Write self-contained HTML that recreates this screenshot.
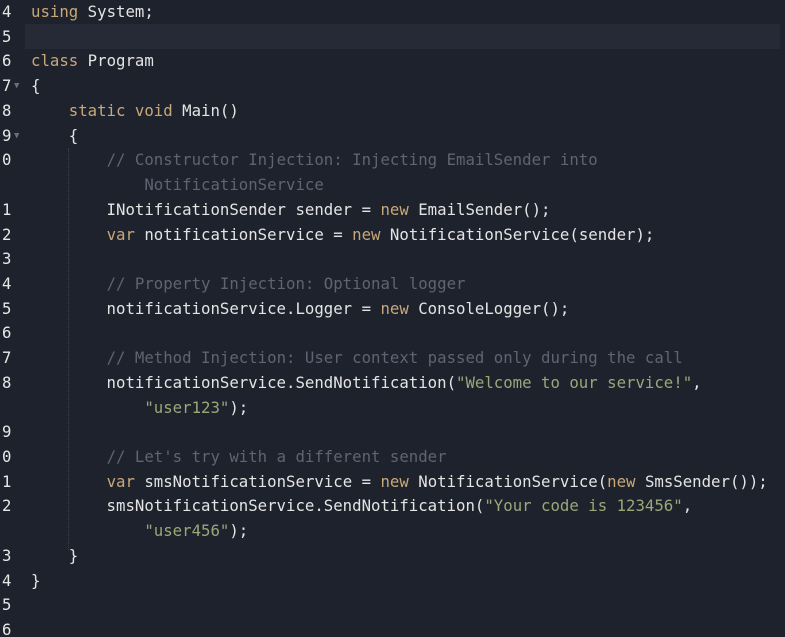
<!DOCTYPE html>
<html><head><meta charset="utf-8"><style>
html,body{margin:0;padding:0;background:#1e222d;width:785px;height:637px;overflow:hidden}
.ed{position:relative;font-family:"DejaVu Sans Mono","Liberation Mono",monospace;font-size:15.7px;color:#e4e4e4}
.l{position:absolute;left:0;height:24.72px;line-height:24.72px;white-space:pre;width:785px}
.n{position:absolute;left:2px;color:#e8e8e8;font-size:15.6px}
.c{position:absolute;left:31px}
.k{color:#c8a878}.m{color:#5e6472}.s{color:#9ca679}
.f{position:absolute;left:14px;color:#6a6f7a;font-size:9px}
.act{position:absolute;left:25px;top:24px;width:755px;height:25px;background:#252a36}
.g{position:absolute;left:68px;width:0;border-left:1px dotted #3a3f4b}
</style></head><body><div class="ed">
<div class="act"></div>
<div class="g" style="top:148px;height:402px"></div>
<div class="l" style="top:0"><span class="n">4</span><span class="c"><span class="k">using</span> System;</span></div>
<div class="l" style="top:24.7px"><span class="n">5</span></div>
<div class="l" style="top:49.4px"><span class="n">6</span><span class="c"><span class="k">class</span> Program</span></div>
<div class="l" style="top:74.2px"><span class="n">7</span><span class="f">▼</span><span class="c">{</span></div>
<div class="l" style="top:98.9px"><span class="n">8</span><span class="c">    <span class="k">static</span> <span class="k">void</span> Main()</span></div>
<div class="l" style="top:123.6px"><span class="n">9</span><span class="f">▼</span><span class="c">    {</span></div>
<div class="l" style="top:148.3px"><span class="n">0</span><span class="c">        <span class="m">// Constructor Injection: Injecting EmailSender into</span></span></div>
<div class="l" style="top:173px"><span class="c">            <span class="m">NotificationService</span></span></div>
<div class="l" style="top:197.8px"><span class="n">1</span><span class="c">        INotificationSender sender = <span class="k">new</span> EmailSender();</span></div>
<div class="l" style="top:222.5px"><span class="n">2</span><span class="c">        <span class="k">var</span> notificationService = <span class="k">new</span> NotificationService(sender);</span></div>
<div class="l" style="top:247.2px"><span class="n">3</span></div>
<div class="l" style="top:271.9px"><span class="n">4</span><span class="c">        <span class="m">// Property Injection: Optional logger</span></span></div>
<div class="l" style="top:296.6px"><span class="n">5</span><span class="c">        notificationService.Logger = <span class="k">new</span> ConsoleLogger();</span></div>
<div class="l" style="top:321.4px"><span class="n">6</span></div>
<div class="l" style="top:346.1px"><span class="n">7</span><span class="c">        <span class="m">// Method Injection: User context passed only during the call</span></span></div>
<div class="l" style="top:370.8px"><span class="n">8</span><span class="c">        notificationService.SendNotification(<span class="s">"Welcome to our service!"</span>,</span></div>
<div class="l" style="top:395.5px"><span class="c">            <span class="s">"user123"</span>);</span></div>
<div class="l" style="top:420.2px"><span class="n">9</span></div>
<div class="l" style="top:445px"><span class="n">0</span><span class="c">        <span class="m">// Let's try with a different sender</span></span></div>
<div class="l" style="top:469.7px"><span class="n">1</span><span class="c">        <span class="k">var</span> smsNotificationService = <span class="k">new</span> NotificationService(<span class="k">new</span> SmsSender());</span></div>
<div class="l" style="top:494.4px"><span class="n">2</span><span class="c">        smsNotificationService.SendNotification(<span class="s">"Your code is 123456"</span>,</span></div>
<div class="l" style="top:519.1px"><span class="c">            <span class="s">"user456"</span>);</span></div>
<div class="l" style="top:543.8px"><span class="n">3</span><span class="c">    }</span></div>
<div class="l" style="top:568.6px"><span class="n">4</span><span class="c">}</span></div>
<div class="l" style="top:593.3px"><span class="n">5</span></div>
<div class="l" style="top:618px"><span class="n">6</span></div>
</div></body></html>
